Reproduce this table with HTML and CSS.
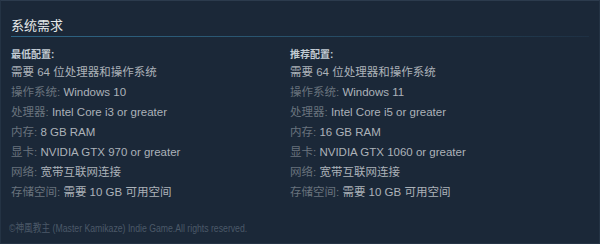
FILE: index.html
```
<!DOCTYPE html>
<html lang="zh-CN">
<head>
<meta charset="utf-8">
<link rel="stylesheet" href="styles.css">
</head>
<body>
<div class="panel">
  <h2 class="title">系统需求</h2>
  <div class="cols">
    <div class="col">
      <div class="head">最低配置:</div>
      <ul class="reqs">
        <li><span class="val">需要 64 位处理器和操作系统</span></li>
        <li><span class="lbl">操作系统:</span> <span class="val">Windows 10</span></li>
        <li><span class="lbl">处理器:</span> <span class="val">Intel Core i3 or greater</span></li>
        <li><span class="lbl">内存:</span> <span class="val">8 GB RAM</span></li>
        <li><span class="lbl">显卡:</span> <span class="val">NVIDIA GTX 970 or greater</span></li>
        <li><span class="lbl">网络:</span> <span class="val">宽带互联网连接</span></li>
        <li><span class="lbl">存储空间:</span> <span class="val">需要 10 GB 可用空间</span></li>
      </ul>
    </div>
    <div class="col">
      <div class="head">推荐配置:</div>
      <ul class="reqs">
        <li><span class="val">需要 64 位处理器和操作系统</span></li>
        <li><span class="lbl">操作系统:</span> <span class="val">Windows 11</span></li>
        <li><span class="lbl">处理器:</span> <span class="val">Intel Core i5 or greater</span></li>
        <li><span class="lbl">内存:</span> <span class="val">16 GB RAM</span></li>
        <li><span class="lbl">显卡:</span> <span class="val">NVIDIA GTX 1060 or greater</span></li>
        <li><span class="lbl">网络:</span> <span class="val">宽带互联网连接</span></li>
        <li><span class="lbl">存储空间:</span> <span class="val">需要 10 GB 可用空间</span></li>
      </ul>
    </div>
  </div>
  <p class="legal">©神風教主 (Master Kamikaze) Indie Game.All rights reserved.</p>
</div>
</body>
</html>
```
FILE: styles.css
```
html, body {
  margin: 0;
  padding: 0;
  background: #1b2838;
}
body {
  font-family: "Liberation Sans", Arial, "Noto Sans CJK SC", sans-serif;
  width: 600px;
  height: 244px;
  overflow: hidden;
}
.panel {
  box-sizing: border-box;
  width: 600px;
  height: 244px;
  border: 1px solid #243344;
  border-top-color: #2c3b4d;
  background: #1b2838;
}
.title {
  margin: 0 10px 0 10px;
  padding: 17px 0 2px 0;
  font-size: 13px;
  line-height: 16px;
  font-weight: normal;
  color: #e6e8ea;
  border-bottom: 1px solid transparent;
  border-image: linear-gradient(90deg, #2e6585 0%, #2a5671 40%, #213d52 80%, #1e3043 100%) 1;
}
.cols {
  display: grid;
  grid-template-columns: 279px 1fr;
  padding: 0 10px;
  margin-top: 11px;
}
.head {
  font-size: 10px;
  line-height: 14px;
  font-weight: bold;
  color: #c3ccd4;
}
.reqs {
  list-style: none;
  margin: 0;
  padding: 0;
  font-size: 11.5px;
  line-height: 20px;
  white-space: nowrap;
}
.lbl {
  color: #69737d;
}
.val {
  color: #acb2b8;
}
.legal {
  margin: 19px 0 0 0;
  padding-left: 8px;
  font-size: 11px;
  line-height: 14px;
  color: #4b5968;
  white-space: nowrap;
  transform: scaleX(0.79);
  transform-origin: 8px 50%;
}
```
